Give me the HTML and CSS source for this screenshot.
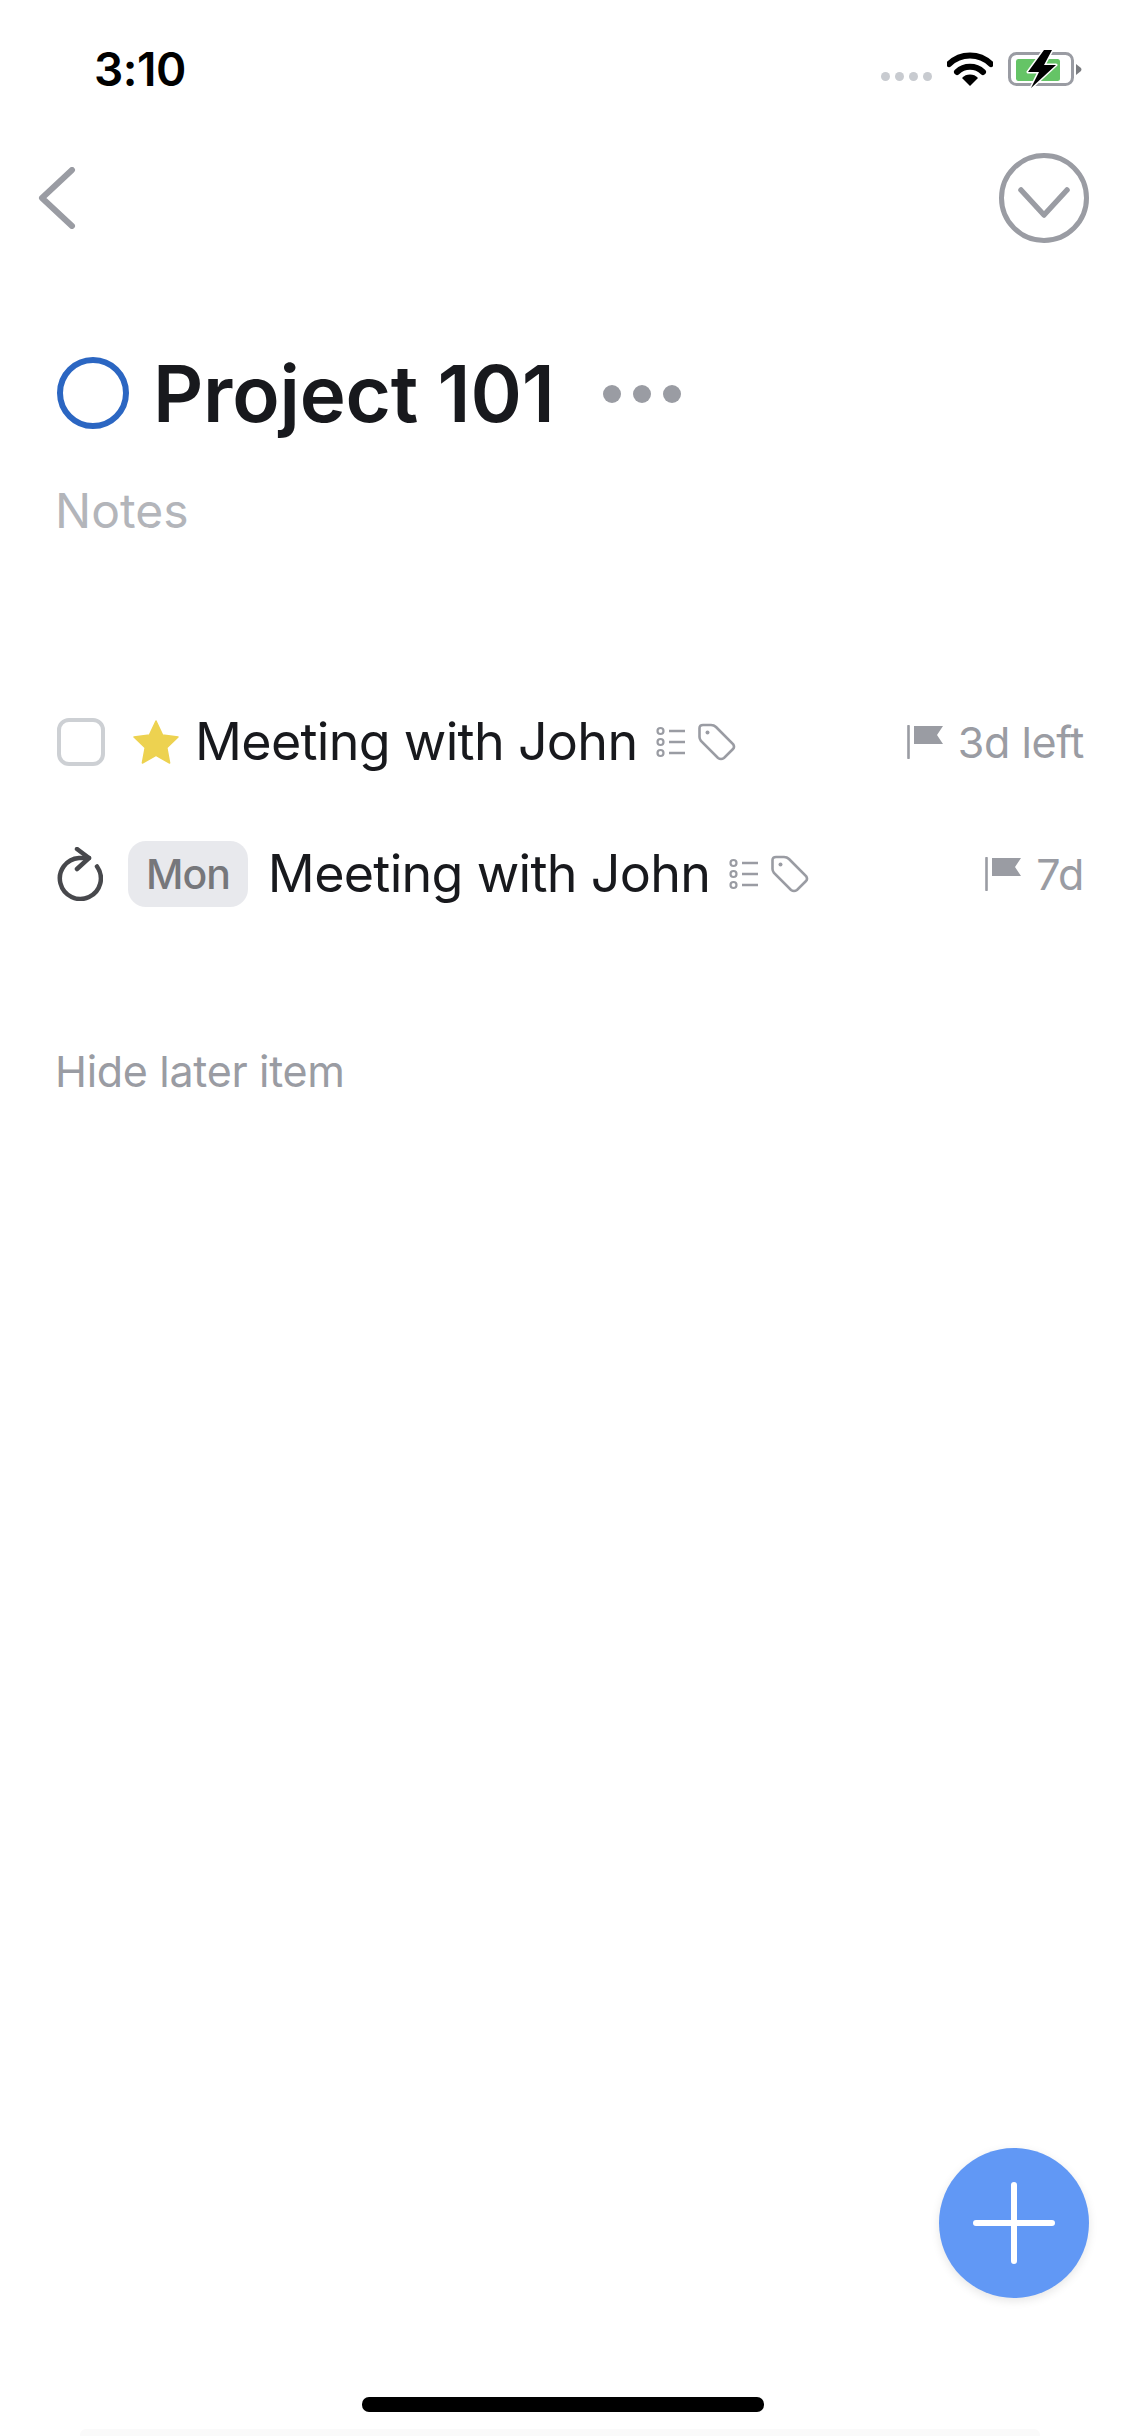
FILE: index.html
```html
<!DOCTYPE html>
<html lang="en">
  <head>
    <meta charset="UTF-8" />
    <meta name="viewport" content="width=device-width, initial-scale=1.0" />
    <title>Project 101</title>
    <link rel="stylesheet" href="styles.css">
  </head>
  <body>
    <div class="page">
      <div class="status-bar">
        <span class="time">3:10</span>
        <div class="status-icons">
          <div class="signal">
            <span class="signal-dot"></span>
            <span class="signal-dot"></span>
            <span class="signal-dot"></span>
            <span class="signal-dot"></span>
          </div>
          <svg class="wifi" width="46" height="34" viewBox="0 0 46 34">
            <path d="M2 12 A30 30 0 0 1 44 12" fill="none" stroke="#000" stroke-width="6" stroke-linecap="round"/>
            <path d="M10 20 A19 19 0 0 1 36 20" fill="none" stroke="#000" stroke-width="6" stroke-linecap="round"/>
            <path d="M15 26 A11 11 0 0 1 31 26 L23 34 Z" fill="#000"/>
          </svg>
          <svg class="battery" width="74" height="38" viewBox="0 0 74 38">
            <rect x="1.5" y="3.5" width="63" height="31" rx="7" fill="none" stroke="#9a9ca3" stroke-width="3"/>
            <rect x="8" y="9" width="44" height="22" rx="2.5" fill="#65c466"/>
            <path d="M68 14 L73 18 Q74 19 73 21 L68 25 Z" fill="#7a7c80"/>
            <path d="M36 0 L20 22 H31 L23 38 L48 15 H36 L44 0 Z" fill="#000" stroke="#fff" stroke-width="3" paint-order="stroke" stroke-linejoin="round"/>
          </svg>
        </div>
      </div>

      <div class="nav-bar">
        <svg class="back-icon" width="38" height="62" viewBox="0 0 38 62">
          <path d="M34 3 L4 31 L34 59" fill="none" stroke="#9a9ca3" stroke-width="6" stroke-linecap="round" stroke-linejoin="round"/>
        </svg>
        <svg class="collapse-icon" width="90" height="90" viewBox="0 0 90 90">
          <circle cx="45" cy="45" r="42.5" fill="none" stroke="#9a9ca3" stroke-width="5"/>
          <path d="M22 37 L45 62 L68 37" fill="none" stroke="#9a9ca3" stroke-width="5.5" stroke-linecap="round" stroke-linejoin="round"/>
        </svg>
      </div>

      <div class="project-head">
        <span class="project-ring"></span>
        <h1 class="project-title">Project 101</h1>
        <div class="more-dots">
          <span class="more-dot"></span>
          <span class="more-dot"></span>
          <span class="more-dot"></span>
        </div>
      </div>
      <p class="notes">Notes</p>

      <div class="task-list">
        <div class="task">
          <span class="checkbox"></span>
          <svg class="star" width="46" height="44" viewBox="0 0 46 44">
            <path d="M23 1 L29.6 15 L45 17 L33.8 27.6 L36.6 43 L23 35.4 L9.4 43 L12.2 27.6 L1 17 L16.4 15 Z" fill="#edd250" stroke="#edd250" stroke-width="1.5" stroke-linejoin="round"/>
          </svg>
          <span class="task-name">Meeting with John</span>
          <svg class="list-icon" width="30" height="32" viewBox="0 0 30 32">
            <circle cx="4.5" cy="5" r="3" fill="none" stroke="#9a9ca3" stroke-width="2.2"/>
            <circle cx="4.5" cy="16" r="3" fill="none" stroke="#9a9ca3" stroke-width="2.2"/>
            <circle cx="4.5" cy="27" r="3" fill="none" stroke="#9a9ca3" stroke-width="2.2"/>
            <path d="M13 5 H29 M13 16 H29 M13 27 H29" stroke="#9a9ca3" stroke-width="2.6"/>
          </svg>
          <svg class="tag-icon" width="38" height="38" viewBox="0 0 38 38">
            <path d="M5 2 H13 Q16 2 18 4 L35 21 Q37 24 35 26 L26 35 Q23 37 20 35 L3 18 Q1.500 16 1.500 14 V5 Q1.500 2 5 2 Z" fill="none" stroke="#9a9ca3" stroke-width="2.600"/>
            <circle cx="9.500" cy="9.500" r="2" fill="#9a9ca3"/>
          </svg>
          <div class="due">
            <svg class="flag-icon" width="36" height="34" viewBox="0 0 36 34">
              <path d="M1.500 1 V33" stroke="#9a9ca3" stroke-width="2.600" stroke-linecap="round"/>
              <path d="M7 1 H36 L30 10 L36 19 H7 Z" fill="#9a9ca3"/>
            </svg>
            <span class="due-text">3d left</span>
          </div>
        </div>
        <div class="task">
          <svg class="repeat-icon" width="46" height="54" viewBox="0 0 46 54">
            <path d="M40 19.500 A20.500 20.500 0 1 1 22 11 H32" fill="none" stroke="#47484c" stroke-width="4.500" stroke-linecap="round"/>
            <path d="M20 2 L32 11 L20 22" fill="none" stroke="#47484c" stroke-width="4.500" stroke-linecap="round" stroke-linejoin="round"/>
          </svg>
          <span class="day-badge">Mon</span>
          <span class="task-name">Meeting with John</span>
          <svg class="list-icon" width="30" height="32" viewBox="0 0 30 32">
            <circle cx="4.5" cy="5" r="3" fill="none" stroke="#9a9ca3" stroke-width="2.2"/>
            <circle cx="4.5" cy="16" r="3" fill="none" stroke="#9a9ca3" stroke-width="2.2"/>
            <circle cx="4.5" cy="27" r="3" fill="none" stroke="#9a9ca3" stroke-width="2.2"/>
            <path d="M13 5 H29 M13 16 H29 M13 27 H29" stroke="#9a9ca3" stroke-width="2.6"/>
          </svg>
          <svg class="tag-icon" width="38" height="38" viewBox="0 0 38 38">
            <path d="M5 2 H13 Q16 2 18 4 L35 21 Q37 24 35 26 L26 35 Q23 37 20 35 L3 18 Q1.500 16 1.500 14 V5 Q1.500 2 5 2 Z" fill="none" stroke="#9a9ca3" stroke-width="2.600"/>
            <circle cx="9.500" cy="9.500" r="2" fill="#9a9ca3"/>
          </svg>
          <div class="due">
            <svg class="flag-icon" width="36" height="34" viewBox="0 0 36 34">
              <path d="M1.500 1 V33" stroke="#9a9ca3" stroke-width="2.600" stroke-linecap="round"/>
              <path d="M7 1 H36 L30 10 L36 19 H7 Z" fill="#9a9ca3"/>
            </svg>
            <span class="due-text">7d</span>
          </div>
        </div>
      </div>

      <p class="hide-later">Hide later item</p>

      <div class="home-indicator"></div>
      <div class="bottom-edge"></div>

      <button class="add-button" type="button">
        <svg width="82" height="82" viewBox="0 0 82 82">
          <path d="M41 3 V79 M3 41 H79" stroke="#fff" stroke-width="6" stroke-linecap="round"/>
        </svg>
      </button>
    </div>
  </body>
</html>
```

FILE: styles.css
```css
* {
  box-sizing: border-box;
}
body {
  margin: 0;
  background: #fff;
  font-family: Inter, "Liberation Sans", sans-serif;
}
.page {
  position: relative;
  display: flex;
  flex-direction: column;
  width: 1125px;
  height: 2436px;
  overflow: hidden;
  background: #fff;
}

/* status bar */
.status-bar {
  display: flex;
  justify-content: space-between;
  align-items: center;
  height: 50px;
  margin-top: 44px;
  padding: 0 43px 0 94px;
}
.time {
  font-size: 46px;
  font-weight: 600;
  letter-spacing: -0.5px;
  color: #000;
}
.status-icons {
  display: flex;
  align-items: center;
}
.signal {
  display: flex;
  gap: 5px;
  margin: 14px 15px 0 0;
}
.signal-dot {
  width: 9px;
  height: 9px;
  border-radius: 50%;
  background: #c8cbd0;
}
.wifi {
  margin-right: 15px;
}

/* nav bar */
.nav-bar {
  display: flex;
  justify-content: space-between;
  align-items: center;
  height: 90px;
  margin-top: 59px;
  padding: 0 36px 0 38px;
}

/* project header */
.project-head {
  display: flex;
  align-items: center;
  height: 80px;
  margin-top: 110px;
  padding-left: 57px;
}
.project-ring {
  width: 72px;
  height: 72px;
  border: 6px solid #2b66c2;
  border-radius: 50%;
}
.project-title {
  margin: 2px 0 0 24px;
  font-size: 78px;
  font-weight: 620;
  line-height: 80px;
  letter-spacing: -0.2px;
  color: #18191d;
}
.more-dots {
  display: flex;
  gap: 12px;
  margin: 2px 0 0 49px;
}
.more-dot {
  width: 18px;
  height: 18px;
  border-radius: 50%;
  background: #9a9ca3;
}
.notes {
  margin: 49px 0 0 55px;
  font-size: 48px;
  line-height: 58px;
  color: #b3b5ba;
}

/* tasks */
.task-list {
  display: flex;
  flex-direction: column;
  gap: 66px;
  margin-top: 169px;
  padding: 0 41px 0 57px;
}
.task {
  display: flex;
  align-items: center;
  height: 66px;
}
.checkbox {
  width: 48px;
  height: 48px;
  border: 4.500px solid #cdd0d4;
  border-radius: 12px;
}
.star {
  margin-left: 28px;
}
.task-name {
  margin-left: 16px;
  font-size: 52px;
  line-height: 66px;
  letter-spacing: -0.7px;
  color: #18191d;
}
.list-icon {
  margin-left: 19px;
}
.tag-icon {
  margin-left: 12px;
}
.repeat-icon {
  flex: none;
}
.day-badge {
  margin-left: 25px;
  padding: 0 18px;
  height: 66px;
  border-radius: 18px;
  background: #e8e9ed;
  font-size: 41px;
  font-weight: 450;
  line-height: 66px;
  letter-spacing: -1px;
  color: #76777b;
}
.day-badge + .task-name {
  margin-left: 20px;
}
.due {
  display: flex;
  align-items: center;
  gap: 15px;
  margin-left: auto;
}
.due-text {
  font-size: 43px;
  font-weight: 430;
  line-height: 50px;
  letter-spacing: -0.4px;
  color: #9a9ca3;
}
.hide-later {
  margin: 139px 0 0 55px;
  font-size: 43px;
  font-weight: 430;
  line-height: 50px;
  letter-spacing: -0.3px;
  color: #9a9ca3;
}

/* bottom */
.home-indicator {
  width: 402px;
  height: 15px;
  margin: auto 0 17px 362px;
  border-radius: 7px;
  background: #000;
}
.bottom-edge {
  height: 7px;
  margin: 0 85px 0 80px;
  border-radius: 6px 6px 0 0;
  background: #fafafa;
}
.add-button {
  position: absolute;
  left: 939px;
  top: 2148px;
  display: flex;
  justify-content: center;
  align-items: center;
  width: 150px;
  height: 150px;
  padding: 0;
  border: none;
  border-radius: 50%;
  background: #6198f5;
  box-shadow: 0 3px 10px rgba(0, 0, 0, 0.1);
}
```
